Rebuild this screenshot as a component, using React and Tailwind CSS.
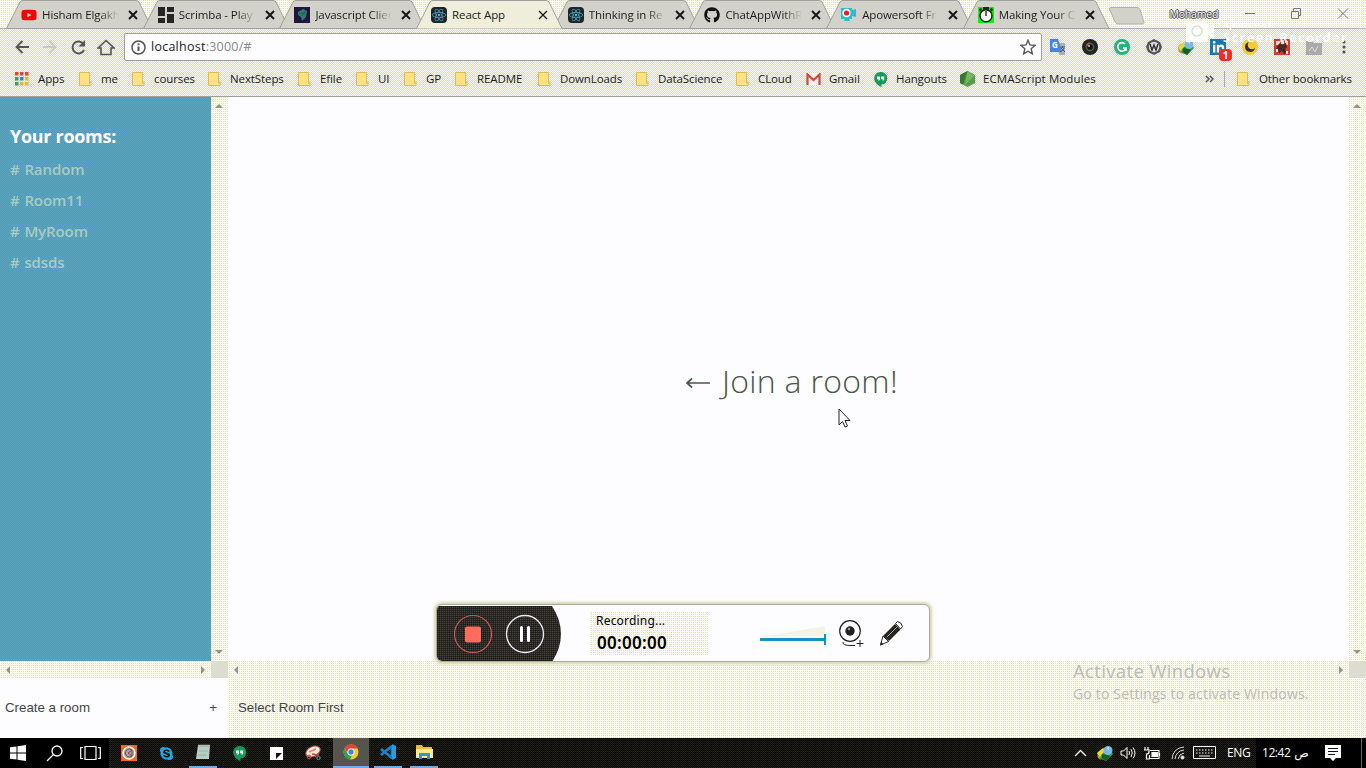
import React from "react";
import { FaGithub, FaYoutube, FaReact, FaSkype, FaLinkedinIn } from "react-icons/fa";

const CHROME =
  "bg-[#e6e6e4] bg-[conic-gradient(at_1px_1px,transparent_75%,#ffffa0_0),conic-gradient(#d4d4da_25%,#fbfbf0_0_50%,#d8d8d4_0_75%,#f8f8fa_0)] [background-size:4px_4px,2px_2px]";
const PALE =
  "bg-[#f5f5e8] bg-[conic-gradient(at_1px_1px,transparent_75%,#ffff9c_0),conic-gradient(#dedee8_25%,#fcfcfe_0_50%,#fafad8_0_75%,#fcfcfe_0)] [background-size:4px_4px,2px_2px]";
const BLUE =
  "bg-[conic-gradient(#68a898_25%,#4a98d4_0_50%,#5ea6a6_0_75%,#4a98d4_0)] [background-size:2px_2px]";
const BAR =
  "bg-[conic-gradient(#000000_25%,#24241c_0_50%,#101014_0_75%,#18180c_0)] [background-size:2px_2px]";

const Scrimba = () => (
  <svg width="16" height="16"><path fill="#252525" d="M0 0h7v9H0zM9 0h7v5H9zM0 11h7v5H0zM9 7h7v9H9z" /></svg>
);
const Leaf = () => (
  <svg width="16" height="16"><path fill="#20153c" d="M0 0h16v16H0z" /><path fill="#2b7f70" d="M4 5l5-3 4 2-1 6-4 4-1-4-3-2z" /><path stroke="#20604f" d="M5 6l6 1M8 9l3-5" /></svg>
);
const ReactIcon = () => (
  <span className="flex h-4 w-4 items-center justify-center rounded-sm bg-[#20232a] text-[14px] text-[#4cb6cc]"><FaReact /></span>
);
const Cam = () => (
  <svg width="16" height="16"><path fill="#36b6cf" d="M0 1h11v2l4-1v8l-4-1v3H8l1 2H3l1-2H0z" /><circle cx="5.500" cy="6" r="4.200" fill="#fff" /><circle cx="5.500" cy="6" r="2.600" fill="#df2525" /></svg>
);
const Watch = () => (
  <svg width="16" height="16"><path fill="#13ed13" d="M0 0h16v16H0z" /><path fill="#222" d="M5 0h6v3H5zM1 2l2-1 1 2-2 2zM15 2l-2-1-1 2 2 2z" /><circle cx="8" cy="8.800" r="6" fill="#fff" stroke="#222" strokeWidth="1.500" /><path stroke="#222" strokeWidth="1.400" d="M8 4v5" /></svg>
);

const tabs = [
  ["Hisham Elgakh", <FaYoutube size={16} color="#f00808" />],
  ["Scrimba - Play", <Scrimba />],
  ["Javascript Clien", <Leaf />],
  ["React App", <ReactIcon />],
  ["Thinking in Re", <ReactIcon />],
  ["ChatAppWithR", <FaGithub size={16} color="#111" />],
  ["Apowersoft Fr", <Cam />],
  ["Making Your C", <Watch />],
];

function Tab({ title, icon, active }) {
  return (
    <div className={`relative flex h-[29px] w-[136.7px] shrink-0 items-center pl-[15px] pt-px ${active ? "z-10" : ""}`}>
      <svg className="absolute left-0 top-0" width="147" height="29">
        <path d="M.5 28.5L14 2Q15 .5 17 .5H130Q132 .5 133 2L146 28.5" fill={active ? "#eeeeda" : "#d2d2ca"} stroke="#a0a09c" />
        {!active && <path d="M0 28.5h147" stroke="#a0a09c" />}
      </svg>
      <span className="relative flex w-[21px]">{icon}</span>
      <span className={`relative w-[77px] overflow-hidden whitespace-nowrap text-[11.5px] tracking-[-0.1px] ${active ? "" : "[mask-image:linear-gradient(90deg,#000_75%,transparent)]"}`}>{title}</span>
      <svg className="relative ml-[9px]" width="10" height="10"><path d="M1 1l8 8M9 1l-8 8" stroke="#181818" strokeWidth={active ? 1.3 : 2} /></svg>
    </div>
  );
}

const Folder = () => (
  <svg width="13" height="14"><path d="M.5.5h10v11l1.500-2v4h-11.500z" fill="#fbe283" stroke="#e3bd4b" /></svg>
);
const AppsIcon = () => (
  <svg width="14" height="14">
    {["#e04838", "#e04838", "#e04838", "#35a35a", "#3c7de0", "#eab236", "#35a35a", "#eab236", "#eab236"].map((c, i) => (
      <rect key={i} x={(i % 3) * 5} y={Math.floor(i / 3) * 5} width="3.500" height="3.500" fill={c} />
    ))}
  </svg>
);
const Gmail = () => (
  <svg width="15" height="12"><path fill="#f7f2f0" d="M1 0h13v12H1z" /><path fill="none" stroke="#d4453a" strokeWidth="2.200" d="M1.500 12V1.500l6 5.500 6-5.500V12" /></svg>
);
const Hangouts = ({ s = 15 }) => (
  <svg width={s} height={s} viewBox="0 0 15 15"><path fill="#159a5c" d="M7.500 0a6.300 6.300 0 0 1 1 12.600V15C4 13 1.200 10 1.200 6.300A6.300 6.300 0 0 1 7.500 0z" /><path fill="#fff" d="M4 4.500h3v3L5.500 9.300V7.200H4zM8.200 4.500h3v3L9.700 9.300V7.200H8.200z" /></svg>
);
const Hex = () => (
  <svg width="15" height="16"><path fill="#579b48" d="M7.500 0L15 4v8l-7.500 4L0 12V4z" /><path fill="#3b7535" d="M7.500 0L0 4v8l3 1.500z" /><path fill="#75b761" d="M7.500 0L15 4 5 14z" /></svg>
);

const marks = [
  ["Apps", "w-[64px]", <AppsIcon />],
  ["me", "w-[53px]", null],
  ["courses", "w-[76px]", null],
  ["NextSteps", "w-[90px]", null],
  ["Efile", "w-[58px]", null],
  ["UI", "w-[48px]", null],
  ["GP", "w-[51px]", null],
  ["README", "w-[83px]", null],
  ["DownLoads", "w-[98px]", null],
  ["DataScience", "w-[100px]", null],
  ["CLoud", "w-[70px]", null],
  ["Gmail", "w-[67px]", <Gmail />],
  ["Hangouts", "w-[87px]", <Hangouts />],
  ["ECMAScript Modules", "w-[140px] tracking-[0.1px]", <Hex />],
];

const Idm = () => (
  <svg width="16" height="15"><path fill="#2d9a3c" d="M0 8q2-5 7-5l7 2 2 3-7 7-5-2z" /><path fill="#f2d536" d="M0 7l6-5 3 2-5 5-1 3z" /><circle cx="11" cy="4.500" r="4.500" fill="#78b9e5" /><path fill="#b9def5" d="M9 2l3-1v3z" /><path fill="#145f24" d="M5 8l5 1 3 1-4 5-4-3z" /><path fill="#d98a22" d="M0 9l3 2 1 3-3-2z" /></svg>
);

function Extensions() {
  return (
    <div className="flex items-center gap-4 pl-[8px]">
      <svg width="16" height="16"><path fill="#a8b0b8" d="M7 4h8v12H9z" /><path fill="#4684e4" d="M0 0h8l4 13H0z" /><path d="M10 8h5M12.500 7v2M14 9q-1 3-4 4M11 9l4 4" stroke="#556" fill="none" /><text x="2" y="9" fontSize="8" fontWeight="700" fill="#fff">G</text></svg>
      <svg width="16" height="16"><circle cx="8" cy="8" r="8" fill="#242424" /><circle cx="8" cy="8" r="3.600" fill="#111" stroke="#4c6a46" strokeWidth="1.500" /><path d="M4.500 7a4 4 0 0 1 3.500-3" stroke="#b65445" strokeWidth="1.500" fill="none" /><circle cx="7" cy="7" r="1" fill="#ccc" /></svg>
      <svg width="16" height="16"><circle cx="8" cy="8" r="8" fill="#20b47d" /><path d="M11 5a4.200 4.200 0 1 0 1 4H9M12 8v4" stroke="#fff" strokeWidth="1.700" fill="none" /></svg>
      <svg width="16" height="16"><path fill="#555" d="M8 0l6 3 2 5-2 5-6 3-6-3-2-5 2-5z" /><circle cx="8" cy="8" r="5.200" fill="#ddd" /><path d="M4 5l2 6 2-5 2 5 2-6" stroke="#333" strokeWidth="1.500" fill="none" /></svg>
      <Idm />
      <span className="relative flex h-4 w-4 items-center justify-center bg-[#1879ad] text-[13px] text-white"><FaLinkedinIn /><b className="absolute left-[9px] top-[10px] flex h-[12px] w-[13px] items-center justify-center rounded-sm bg-[#f02c25] text-[10px]">1</b></span>
      <svg width="16" height="16"><circle cx="8" cy="8" r="8" fill="#f5ca38" /><path fill="#302850" d="M7 3a5 5 0 1 0 6 6 4 4 0 0 1-6-6z" /></svg>
      <svg width="16" height="16"><path fill="#d13d32" d="M0 0h16v16H0z" /><path fill="#f0d5cc" d="M2 2h4v4H2zM7 1h3v4H7zM11 2h3v4h-3z" /><path fill="#482924" d="M4 6l2-2 2 2 4-2 1 4-2 2 2 4-3 1-2-3-3 2-1-3-2-1z" /><path fill="#eee" d="M2 10h2v3H2zM12 12h2v3h-2z" /></svg>
      <svg width="16" height="15"><path fill="#aaa" d="M0 1h6l2 2h8v12H0z" /><path d="M3 11l3-4 3 5 3-6" stroke="#ddd" fill="none" /></svg>
    </div>
  );
}

const arrowPaths = { up: "M0 4h8L4 0z", down: "M0 0h8L4 4z", left: "M4 0v8L0 4z", right: "M0 0v8l4-4z" };
const Arrow = ({ dir }) => {
  const v = dir === "up" || dir === "down";
  return <svg width={v ? 8 : 4} height={v ? 4 : 8}><path fill="#94948c" d={arrowPaths[dir]} /></svg>;
};
const VBar = () => (
  <div className={`flex h-[564px] w-[17px] flex-col items-center justify-between pb-[7px] pr-px pt-[7px] [background-position:1px_0] ${PALE}`}><Arrow dir="up" /><Arrow dir="down" /></div>
);

function Recorder() {
  return (
    <div className="absolute left-[436px] top-[604px] flex h-[58px] w-[494px] items-center overflow-hidden rounded-[6px] border border-[#aaa] bg-[#fdfdff] pt-px shadow-[0_0_3px_2px_#d6d6b0]">
      <svg width="125" height="56" className="shrink-0">
        <defs><pattern id="weave" width="2" height="2" patternUnits="userSpaceOnUse"><path fill="#29291e" d="M0 0h2v2H0z" /><path fill="#191b20" d="M0 0h1v1H0z" /><path fill="#48481a" d="M1 1h1v1H1z" /></pattern></defs>
        <path d="M0 0H115Q133 28 115 56H0z" fill="url(#weave)" />
        <circle cx="36" cy="28" r="18.500" fill="none" stroke="#d25a50" strokeWidth="1.200" /><rect x="28" y="20.500" width="16" height="16" rx="2" fill="#ff6c5c" />
        <circle cx="88" cy="28" r="18.500" fill="none" stroke="#eee" strokeWidth="1.300" /><path d="M84.500 21.500v13M91.500 21.500v13" stroke="#fff" strokeWidth="3" strokeLinecap="round" />
      </svg>
      <div className={`ml-[28px] h-[43px] w-[119px] whitespace-nowrap pl-[6px] font-['Noto_Sans',sans-serif] text-black ${PALE}`}>
        <div className="h-[20px] text-[12px] leading-[18px] tracking-[0.2px]">Recording...</div>
        <div className="pl-px text-[17px] font-semibold leading-[22px] tracking-[0.3px]">00:00:00</div>
      </div>
      <svg className="ml-[51px]" width="67" height="24"><path d="M0 15L65 4v10z" fill="#f3f5e2" /><path d="M0 17.500h65" stroke="#168fc2" strokeWidth="3" /><path d="M65 12v11" stroke="#168fc2" strokeWidth="2" /></svg>
      <svg className="ml-[12px]" width="26" height="30"><circle cx="11" cy="12" r="10.300" fill="none" stroke="#222" strokeWidth="1.200" /><circle cx="11" cy="12" r="4.700" fill="#20201c" /><circle cx="10" cy="10" r="1.300" fill="#999" /><path d="M4 23q-1 3.500 8 3.500h4M21 21v7M17.500 24.500h7" stroke="#222" fill="none" /></svg>
      <svg className="ml-[14px]" width="26" height="28"><path fill="#25251e" d="M4 16L16 4l5.500 5.500L10 21z" /><path fill="#fdfdff" stroke="#25251e" d="M16.500 3.500l2-2q4 .5 5 5l-2 2.500zM4 16l5.500 5.500L1.500 25z" /><path fill="#25251e" d="M2 22l2.500 2L1 25.500z" /><path stroke="#aaa" d="M8 17L18 7" /></svg>
    </div>
  );
}

function Taskbar() {
  return (
    <div className={`flex h-[30px] items-center text-white ${BAR}`}>
      <div className="flex h-full w-[109px] items-center bg-black pl-[10px]">
        <svg width="16" height="16"><path fill="#fff" d="M0 2.300L6.500 1.400V7.500H0zM7.500 1.200L16 0v7.500H7.500zM0 8.500h6.500v6.100L0 13.700zM7.500 8.500H16V16l-8.500-1.200z" /></svg>
        <svg className="ml-[20px]" width="17" height="17" fill="none" stroke="#fff" strokeWidth="1.300"><circle cx="11" cy="6" r="5" /><path d="M7.500 9.500L1 16" /></svg>
        <svg className="ml-[17px]" width="21" height="16" fill="none" stroke="#fff" strokeWidth="1.200"><path d="M5 1.500h11v13H5zM3 2.500H.7v11H3M18 2.500h2.300v11H18" /></svg>
      </div>
      <div className="flex items-center">
        <span className="flex w-[38px] pl-[12px]"><svg width="16" height="16"><path fill="#ef6727" d="M0 0h16v16H0z" /><circle cx="8" cy="8" r="6" fill="#aaa" stroke="#fff" strokeWidth="1.500" /><path d="M11 5a4 4 0 1 0 0 6M7 8l4-3v6z" fill="none" stroke="#843e24" /></svg></span>
        <span className="flex w-[38px] pl-[12px] text-[15px] text-[#20a9df]"><FaSkype /></span>
        <span className="ml-[4px] flex h-[30px] w-[28px] items-center justify-center border-b-2 border-[#76a9dd]"><svg width="16" height="16"><path d="M3 1h12l-1 14H1z" fill="#b6cec5" /><path d="M3 1h12v2H3z" fill="#f7f4d0" /><path d="M4 7h9M3 11h9" stroke="#96b3a8" /><path d="M4 0v3M6 0v3M8 0v3M10 0v3M12 0v3M14 0v3" stroke="#777" /></svg></span>
        <span className="ml-[15px] flex w-[38px]"><Hangouts s={15} /></span>
        <svg width="13" height="13"><path fill="#fff" d="M0 0h13v13H0z" /><path fill="#111" d="M6 6h6L6 12z" /></svg>
        <svg className="ml-[22px]" width="18" height="16"><ellipse cx="8" cy="6.500" rx="7.500" ry="4.800" fill="#f6ecd8" stroke="#ce5749" transform="rotate(-25 8 6.500)" /><path d="M4 7l7-3" stroke="#dd8275" strokeWidth="1.500" /><path d="M7 9l7 1M10 12l4-4" stroke="#bb493e" strokeWidth="1.500" /><circle cx="4" cy="12" r="1.800" fill="none" stroke="#c44" /><circle cx="13.500" cy="13" r="1.700" fill="none" stroke="#49a" /></svg>
        <span className="ml-[10px] flex h-[30px] w-[36px] items-center justify-center border-b-2 border-[#76a9dd] bg-[#55554d]">
          <svg width="16" height="16" viewBox="0 0 16 16"><circle cx="8" cy="8" r="7.500" fill="#f2ca31" /><path fill="#de473b" d="M1.500 4.300A7.500 7.500 0 0 1 14.800 4.500H8a3.500 3.500 0 0 0-3.300 4.500z" /><path fill="#2ca05a" d="M1.500 4.300l3.200 5.500a3.500 3.500 0 0 0 4.200 1.700L7 15.500A7.500 7.500 0 0 1 1.500 4.300z" /><circle cx="8" cy="8" r="3.500" fill="#fff" /><circle cx="8" cy="8" r="2.700" fill="#4785df" /></svg>
        </span>
        <span className="ml-[5px] flex h-[30px] w-[28px] items-center justify-center border-b-2 border-[#76a9dd]"><svg width="17" height="16"><path d="M1 5l11 9M1 11L12 2M12 1v14" stroke="#1684cf" strokeWidth="2.700" fill="none" /><path fill="#299ae0" d="M12 0l4 2v12l-4 2z" /></svg></span>
        <span className="ml-[8px] flex h-[30px] w-[28px] items-center justify-center border-b-2 border-[#76a9dd]"><svg width="17" height="16"><path fill="#e9ba3f" d="M0 1h6l1 2h9v11H0z" /><path fill="#fce994" d="M0 5h17v9H0z" /><path fill="#3795ca" d="M3 9h11v6h-3v-3H6v3H3z" /></svg></span>
      </div>
      <div className="ml-auto flex h-full w-[292px] items-center">
        <svg width="13" height="8" fill="none" stroke="#fff" strokeWidth="1.400"><path d="M1 7l5.500-5.500L12 7" /></svg>
        <span className="ml-[10px]"><Idm /></span>
        <svg className="ml-[7px]" width="16" height="14" fill="none" stroke="#fff"><path d="M1 5h2.500L7 1.500v11L3.500 9H1zM9 5q1 2 0 4M11 3q2.500 4 0 8M13 1.500q4 5.500 0 11" /></svg>
        <svg className="ml-[8px]" width="17" height="13" fill="none" stroke="#fff" strokeWidth="1.200"><path d="M6 3.500h9v8H5.500V8M15.500 6v3M1 0v3M4 0v3M0 3h5v2q0 2-2.500 2V12h3" /><path fill="#fff" d="M8 5.500h5.500v4H8z" /></svg>
        <svg className="ml-[10px]" width="14" height="14" fill="none" stroke="#ddd"><path d="M1 13Q2 2 13 1M4 13q1-8 9-9M7 13q1-5 6-6" /><circle cx="11.500" cy="11.500" r="1.500" fill="#fff" /></svg>
        <svg className="ml-[8px]" width="23" height="14" fill="none" stroke="#fff"><path d="M.5.5h22v12H.5z" /><path strokeDasharray="1.5 1.5" d="M3 4h17M3 7h17" /><path d="M6 10h11" /></svg>
        <span className="ml-[11px] w-[29px] text-[12px] tracking-[-0.4px]">ENG</span>
        <div className="flex h-full flex-1 items-center bg-black pl-[6px]">
          <span className="text-[12px] tracking-[-0.45px]">12:42</span><span className="ml-[4px] font-['DejaVu_Sans',sans-serif] text-[12px]">ص</span>
          <svg className="ml-auto mr-[19px]" width="17" height="16"><path fill="#fff" d="M0 0h16v13h-5l-3 3-3-3H0z" /><path d="M3 3.500h10M3 6.500h10M3 9.500h7" stroke="#111" /></svg>
          <span className="mr-[4px] h-full w-px bg-[#666]" />
        </div>
      </div>
    </div>
  );
}

export default function App() {
  return (
    <div className="relative flex h-[768px] w-[1366px] flex-col overflow-hidden bg-[#fdfdff] font-['Open_Sans','Noto_Sans',sans-serif] text-[#1b1b1b]">
      <header className={`flex h-[97px] shrink-0 flex-col border-b border-[#a0a098] ${CHROME}`}>
        <div className={`flex h-[29px] border-b border-[#b4b4ac] pl-[6px] ${PALE}`}>
          {tabs.map(([t, i], n) => <Tab key={t} title={t} icon={i} active={n === 3} />)}
          <svg className="ml-[9px] mt-[7px]" width="36" height="18"><path d="M2 .5h26q2 0 3 2l4 13q0 1-1 1.500H9q-2 0-3-2L.5 2q0-1.500 1.500-1.500z" fill="#d2d2ca" stroke="#b2b2aa" /></svg>
          <span className="ml-[25px] mt-[6px] text-[10.5px] leading-4 tracking-[-0.2px] text-white [text-shadow:1px_0_#444,-1px_0_#444,0_1px_#444,0_-1px_#444]">Mohamed</span>
          <svg className="ml-auto mr-[17px] mt-[8px]" width="104" height="11" fill="none" stroke="#777"><path d="M0 5.500h10M46.500 3.500h7v7h-7zM48.500 3V.5h7v7H54M93 .5l10 10M103 .5l-10 10" /></svg>
        </div>
        <div className="flex h-[36px] items-center">
          <svg className="ml-[15px]" width="14" height="14" fill="none" stroke="#555" strokeWidth="1.800"><path d="M14 7H1.500M7.500 1l-6 6 6 6" /></svg>
          <svg className="ml-[14px]" width="14" height="14" fill="none" stroke="#c9c9c8" strokeWidth="1.800"><path d="M0 7h12.500M6.500 1l6 6-6 6" /></svg>
          <svg className="ml-[14px]" width="15" height="15" fill="none" stroke="#555" strokeWidth="1.900"><path d="M12.500 4A6 6 0 1 0 13 10" /><path fill="#555" stroke="none" d="M14 0v6.500H7.500z" /></svg>
          <svg className="ml-[11px]" width="18" height="17" fill="none" stroke="#555" strokeWidth="1.600"><path d="M1 9l8-7.500L17 9h-3v6.500H4V9z" /></svg>
          <div className="ml-[9px] flex h-[28px] w-[918px] items-center rounded-[2px] border border-[#a0a098] bg-[#fdfdff] pl-[6px] pr-[5px]">
            <svg width="15" height="15" fill="none" stroke="#555" strokeWidth="1.500"><circle cx="7.500" cy="7.500" r="6.500" /><path strokeWidth="2" d="M7.500 6.500V11M7.500 3.500v1.800" /></svg>
            <span className="ml-[5px] text-[12.500px] leading-4 tracking-[0.25px]">localhost<span className="text-[#888]">:3000/#</span></span>
            <svg className="ml-auto" width="16" height="16" fill="none" stroke="#555" strokeWidth="1.400"><path d="M8 1.200l2 4.700 5 .5-3.800 3.400 1.100 5L8 12.200l-4.300 2.600 1.100-5L1 6.400l5-.5z" /></svg>
          </div>
          <Extensions />
          <svg className="ml-[20px]" width="4" height="16" fill="#555"><circle cx="2" cy="3" r="1.600" /><circle cx="2" cy="8" r="1.600" /><circle cx="2" cy="13" r="1.600" /></svg>
        </div>
        <div className="flex h-[28px] items-center pl-[15px] text-[11.500px] tracking-[-0.1px]">
          {marks.map(([t, w, icon]) => (
            <div key={t} className={`flex shrink-0 items-center whitespace-nowrap ${w}`}><span className={`flex shrink-0 ${icon ? "w-[23px]" : "w-[22px]"}`}>{icon || <Folder />}</span>{t}</div>
          ))}
          <svg className="ml-auto" width="9" height="8" fill="none" stroke="#555" strokeWidth="1.500"><path d="M1 1l3 3-3 3M5 1l3 3-3 3" /></svg>
          <span className="ml-[10px] h-[16px] w-px bg-[#aaa]" />
          <span className="ml-[12px] flex w-[22px]"><Folder /></span>
          <span className="mr-[14px] w-[93px] whitespace-nowrap">Other bookmarks</span>
        </div>
      </header>

      <main className="flex h-[641px] shrink-0">
        <aside className="w-[228px]">
          <div className="flex">
            <div className={`h-[564px] w-[211px] pl-[10px] pt-[27px] ${BLUE}`}>
              <h3 className="text-[18px] font-bold leading-6 tracking-[-0.3px] text-white">Your rooms:</h3>
              <ul className="pt-[6px] text-[15px] font-semibold leading-[31px] tracking-[-0.1px] text-[#a8ccc0] [word-spacing:1px]">
                {["Random", "Room11", "MyRoom", "sdsds"].map((r) => <li key={r}># {r}</li>)}
              </ul>
            </div>
            <VBar />
          </div>
          <div className="flex h-[17px]">
            <div className={`flex w-[211px] items-center justify-between px-[6px] ${PALE}`}><Arrow dir="left" /><Arrow dir="right" /></div>
            <div className="w-[17px] bg-[#dcdcd0]" />
          </div>
          <div className="flex h-[60px] items-center justify-between pl-[5px] pr-[11px] font-['Liberation_Sans',sans-serif] text-[13.300px] text-[#444]"><span>Create a room</span><span>+</span></div>
        </aside>
        <section className="w-[1138px]">
          <div className="flex">
            <div className="flex h-[564px] w-[1121px] items-center pl-[458px] pt-[8px] text-[#4a554c]">
              <svg width="24" height="12" fill="none" stroke="#4a554c" strokeWidth="1.700"><path d="M24 6H1M6 1.500L1 6l5 4.500" /></svg>
              <span className="mb-[4px] ml-[12px] whitespace-nowrap text-[32px] font-light leading-[40px] tracking-[0.3px]">Join a room!</span>
            </div>
            <VBar />
          </div>
          <div className={PALE}>
            <div className="flex h-[17px]"><div className="flex flex-1 items-center justify-between px-[6px]"><Arrow dir="left" /><Arrow dir="right" /></div><div className="w-[17px] bg-[#dcdcd0]" /></div>
            <div className="flex h-[60px] items-center pl-[10px] font-['Liberation_Sans',sans-serif] text-[13.300px] text-[#444]">Select Room First</div>
          </div>
        </section>
      </main>
      <Taskbar />
      <Recorder />

      <svg className="absolute left-[838px] top-[408px]" width="13" height="21"><path d="M1 1v16l3.500-3.500L7 19l2.500-1L7 12.500h5z" fill="#fff" stroke="#222" /></svg>
      <div className="absolute left-[1073px] top-[660px] whitespace-nowrap text-[#bcbcb2]">
        <div className="text-[18.500px] leading-[22px] tracking-[0.35px]">Activate Windows</div>
        <div className="text-[14px] leading-[23px] tracking-[0.18px]">Go to Settings to activate Windows.</div>
      </div>
      <div className="absolute left-[1186px] top-[20px] flex items-center gap-[9px] text-white opacity-90">
        <svg width="28" height="22"><path fill="#fff" d="M0 4q0-3 3-3h16q3 0 3 3v3l6-4v15l-6-4v7H0z" /><circle cx="11" cy="10" r="5" fill="none" stroke="#ddddd5" strokeWidth="1.500" /></svg>
        <div className="whitespace-nowrap font-bold"><div className="h-[10px] text-[9px] leading-[9px]">Apowersoft</div><div className="text-[13px] leading-[14px] tracking-[1.3px]">Screen Recorder</div></div>
      </div>
    </div>
  );
}
